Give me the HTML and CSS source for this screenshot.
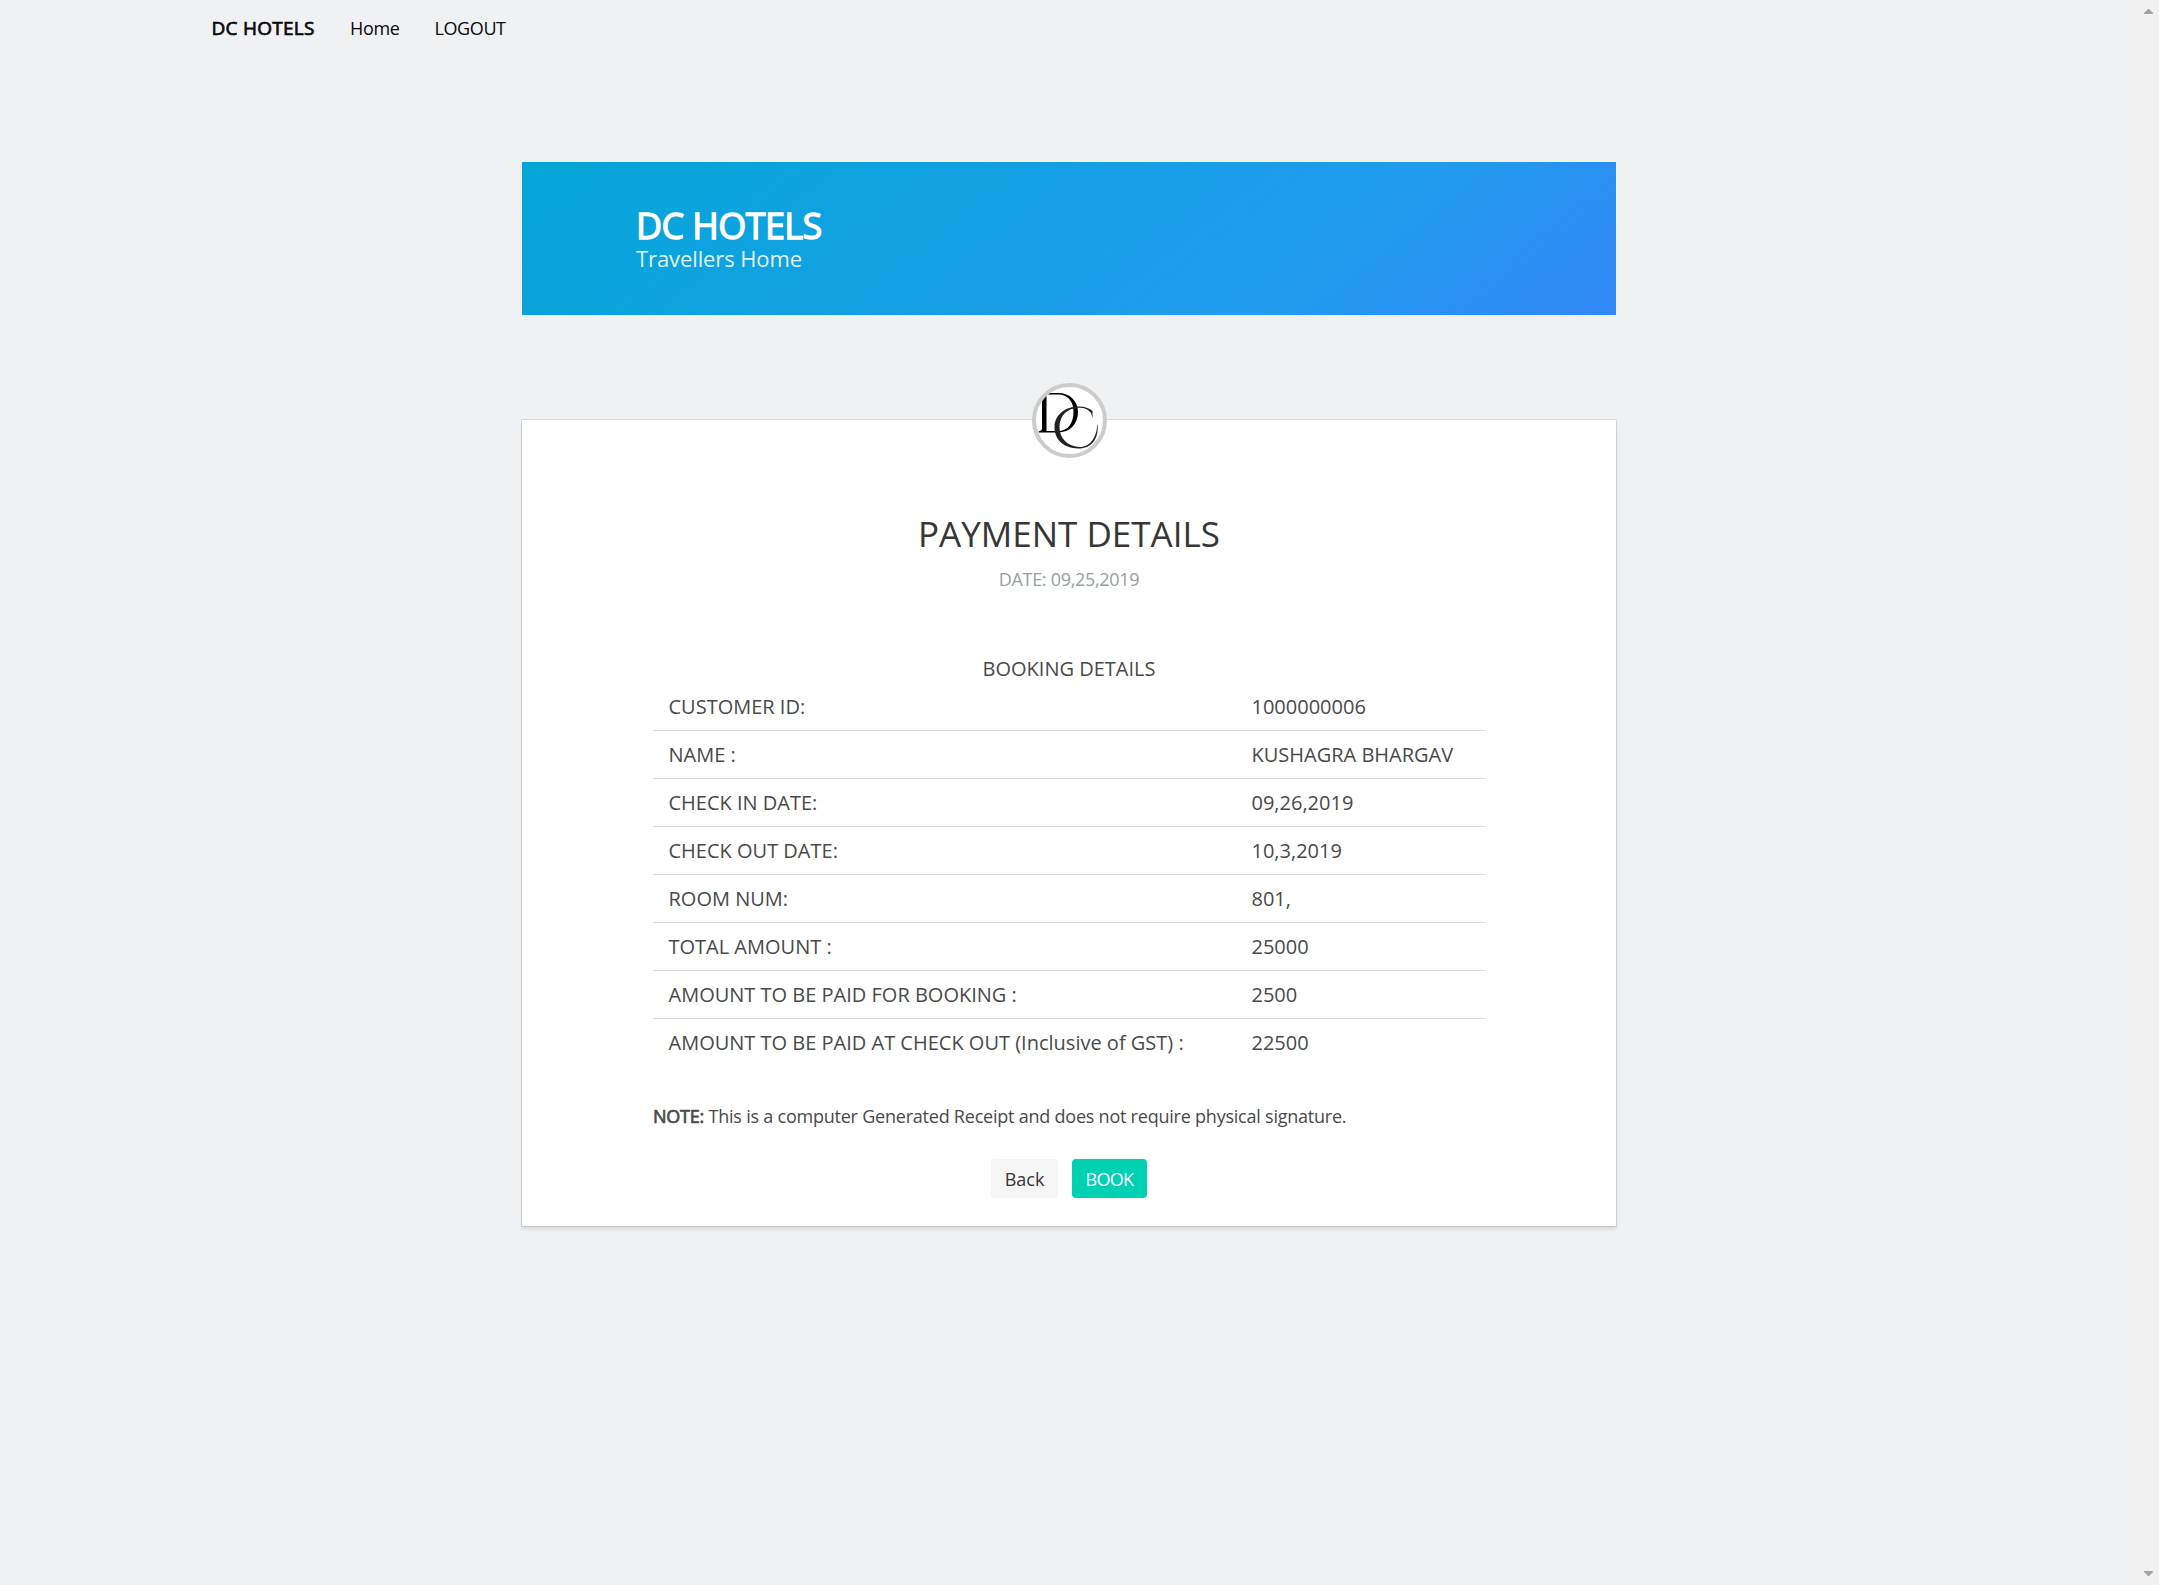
FILE: index.html
```html
<!DOCTYPE html>
<html lang="en">
<head>
<meta charset="utf-8">
<title>DC HOTELS</title>
<link rel="stylesheet" href="styles.css">
</head>
<body>
<div class="page">
  <nav class="navbar">
    <a class="brand">DC HOTELS</a>
    <a class="home">Home</a>
    <a class="logout">LOGOUT</a>
  </nav>
  <header class="hero">
    <h1 class="hero-title">DC HOTELS</h1>
    <p class="hero-subtitle">Travellers Home</p>
  </header>
  <main class="card">
    <div class="avatar">
      <svg width="67" height="67" viewBox="0 0 67 67" aria-label="DC">
        <path fill="#000" fill-rule="evenodd" d="M3 6H22C34 6 42 14 42 25C42 37 34 45.500 22 45.500H2.500V44.500C5 44 6 43 6 41V10C6 8 5 7 3 6.500ZM10.500 7.500V44H22C32 44 37.500 36 37.500 25C37.500 14 32 7.500 22 7.500Z"/>
        <path fill="#222" d="M56.500 31L55 26C52 22 48 20.700 43 20.700C31 20.700 23.500 29 23.500 40C23.500 51 31 59 43 60C54 60.500 61 50 61 38L61.500 38C63 53 54 62 42 61.500C28 61 18.500 53 18.500 40C18.500 28 29 19.500 43 19.500C49 19.500 53 21 56.500 24Z"/>
      </svg>
    </div>
    <h2 class="title">PAYMENT DETAILS</h2>
    <p class="date">DATE: 09,25,2019</p>
    <table class="details">
      <caption>BOOKING DETAILS</caption>
      <tbody>
        <tr><td>CUSTOMER ID:</td><td>1000000006</td></tr>
        <tr><td>NAME :</td><td>KUSHAGRA BHARGAV</td></tr>
        <tr><td>CHECK IN DATE:</td><td>09,26,2019</td></tr>
        <tr><td>CHECK OUT DATE:</td><td>10,3,2019</td></tr>
        <tr><td>ROOM NUM:</td><td>801,</td></tr>
        <tr><td>TOTAL AMOUNT :</td><td>25000</td></tr>
        <tr><td>AMOUNT TO BE PAID FOR BOOKING :</td><td>2500</td></tr>
        <tr><td>AMOUNT TO BE PAID AT CHECK OUT (Inclusive of GST) :</td><td>22500</td></tr>
      </tbody>
    </table>
    <p class="note"><strong>NOTE:</strong> This is a computer Generated Receipt and does not require physical signature.</p>
    <div class="actions">
      <a class="button back">Back</a>
      <a class="button book">BOOK</a>
    </div>
  </main>
</div>
<div class="scrollbar">
  <svg width="9" height="5" viewBox="0 0 9 5"><path fill="#a3a3a3" d="M0 5V4L4 0H5L9 4V5Z"/></svg>
  <svg width="9" height="5" viewBox="0 0 9 5"><path fill="#a3a3a3" d="M0 0V1L4 5H5L9 1V0Z"/></svg>
</div>
</body>
</html>
```
FILE: styles.css
```css
* { box-sizing: border-box; }
body {
  margin: 0;
  height: 1585px;
  display: flex;
  overflow: hidden;
  background: #f0f1f3;
  color: #4a4a4a;
  font-family: "Open Sans", "Noto Sans", sans-serif;
  font-size: 18px;
}
h1, h2, p { margin: 0; font-weight: 400; }
.page { flex: 1; display: flex; flex-direction: column; align-items: center; }
.scrollbar {
  width: 21px;
  background: #f1f1f1;
  display: flex;
  flex-direction: column;
  justify-content: space-between;
  align-items: center;
  padding: 9px 0;
}
.scrollbar svg { display: block; }

.navbar {
  align-self: stretch;
  height: 56px;
  padding-left: 211px;
  display: flex;
  align-items: center;
  color: #0a0a0a;
}
.brand { width: 139px; padding-left: .5px; font-size: 19px; line-height: 28px; letter-spacing: .25px; -webkit-text-stroke: .7px; }
.home { width: 84.500px; letter-spacing: -.3px; }
.logout { letter-spacing: -.4px; }

.hero {
  width: 1094px;
  height: 153px;
  margin-top: 106px;
  padding: 43px 114px;
  background: linear-gradient(141deg, #04a6d7 0%, #209cee 71%, #3287f5 100%);
  color: #fff;
}
.hero-title { font-size: 36px; line-height: 42px; letter-spacing: -.6px; -webkit-text-stroke: 1.3px; }
.hero-subtitle { font-size: 22px; line-height: 22px; letter-spacing: -.1px; color: rgba(255, 255, 255, .9); }

.card {
  width: 1094px;
  height: 806px;
  margin-top: 105px;
  padding: 0 131px 0 130px;
  background: #fff;
  box-shadow: 0 2.500px 3.750px rgba(10, 10, 10, .1), 0 0 0 1px rgba(10, 10, 10, .1);
  display: flex;
  flex-direction: column;
  align-items: center;
}
.avatar {
  width: 75px;
  height: 75px;
  margin: -37px 0 0 1px;
  border: 4px solid #ccc;
  border-radius: 50%;
  background: #fff;
  overflow: hidden;
}
.avatar svg { display: block; }
.title { margin: 56px 0 0 1px; font-size: 35px; line-height: 40px; color: #363636; }
.date { margin: 13px 0 0 1px; line-height: 24px; color: #95a0a0; letter-spacing: -.3px; }
.details {
  width: 832px;
  margin-top: 64px;
  border-collapse: separate;
  border-spacing: 0;
  table-layout: fixed;
  font-size: 20px;
}
.details caption { height: 28px; padding-left: 1px; line-height: 28px; }
.details td {
  height: 48px;
  padding: 0 15px;
  line-height: 27px;
  border-bottom: 1px solid #dbdbdb;
  white-space: nowrap;
}
.details td:first-child { width: 584px; padding-left: 16px; }
.details tr:last-child td { border-bottom-color: transparent; }
.note { align-self: stretch; margin-top: 36px; padding-left: 1px; line-height: 27px; letter-spacing: -.225px; }
.note strong { font-weight: 400; -webkit-text-stroke: .7px; }
.actions { display: flex; gap: 14px; margin-top: 29px; padding-left: 1px; }
.button { height: 39px; line-height: 40px; border-radius: 4px; text-align: center; }
.back { width: 67px; background: #f5f5f5; color: #363636; }
.book { width: 75px; background: #00d1b2; color: #fff; letter-spacing: -.7px; }
```
